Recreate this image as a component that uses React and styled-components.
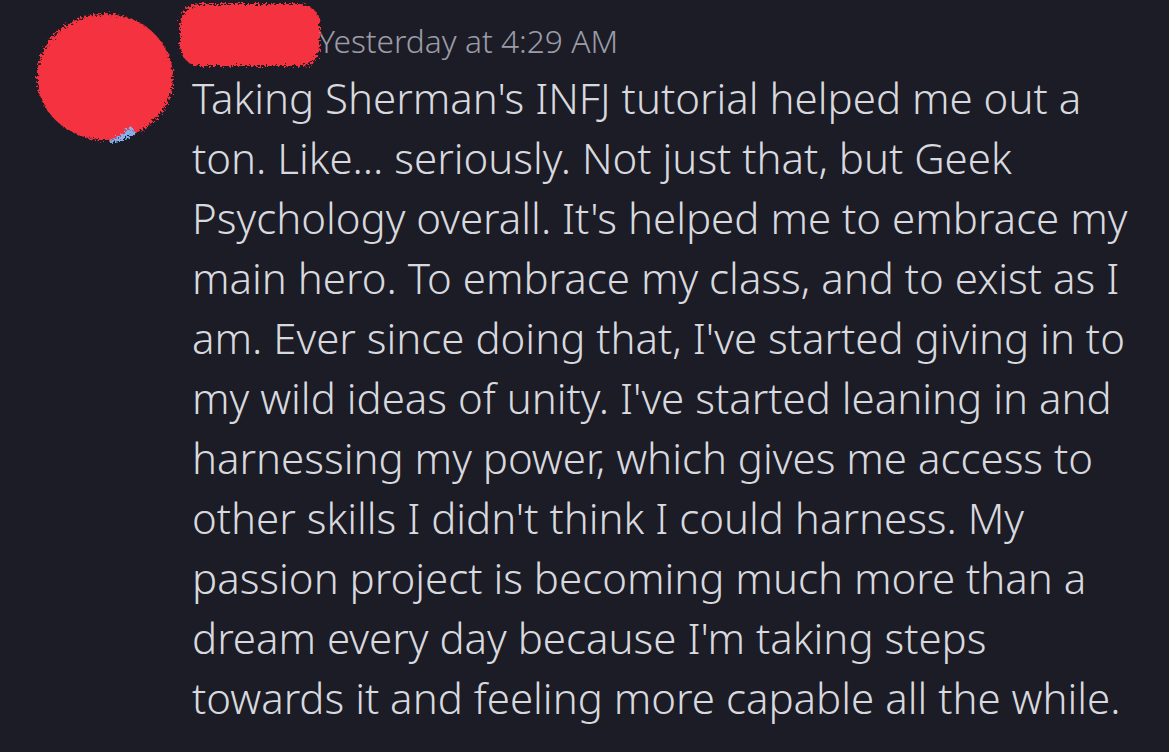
import React from 'react';
import styled, { createGlobalStyle } from 'styled-components';

const GlobalStyle = createGlobalStyle`
  html, body {
    margin: 0;
    padding: 0;
    background-color: #1c1c26;
  }
  body {
    font-family: "Noto Sans", "Open Sans", sans-serif;
  }
`;

const Page = styled.div`
  display: flex;
  width: 1169px;
  height: 752px;
  overflow: hidden;
  background-color: #1c1c26;
`;

const AvatarCol = styled.div`
  width: 160px;
  flex-shrink: 0;
  padding: 8px 0 0 31px;
`;

const Content = styled.div`
  display: flex;
  flex-direction: column;
  padding-left: 1px;
`;

const Header = styled.div`
  display: flex;
  align-items: flex-end;
  height: 68px;
  margin-left: -16px;
`;

const Timestamp = styled.span`
  font-size: 31.7px;
  font-weight: 300;
  color: #9c9ca8;
  line-height: 1;
  margin: 0 0 11px -6px;
  position: relative;
  z-index: 0;
`;

const NameMark = styled.svg`
  display: block;
  position: relative;
  z-index: 1;
`;

const Message = styled.div`
  font-size: 42px;
  font-weight: 300;
  line-height: 60px;
  color: #d8d9de;
  white-space: nowrap;
`;

const Line = styled.div``;

const lines = [
  "Taking Sherman's INFJ tutorial helped me out a",
  "ton. Like... seriously. Not just that, but Geek",
  "Psychology overall. It's helped me to embrace my",
  "main hero. To embrace my class, and to exist as I",
  "am. Ever since doing that, I've started giving in to",
  "my wild ideas of unity. I've started leaning in and",
  "harnessing my power, which gives me access to",
  "other skills I didn't think I could harness. My",
  "passion project is becoming much more than a",
  "dream every day because I'm taking steps",
  "towards it and feeling more capable all the while.",
];

const Avatar = () => (
  <svg width="148" height="140" viewBox="0 0 148 140">
    <defs>
      <filter id="rough" x="-10%" y="-10%" width="120%" height="120%">
        <feTurbulence type="fractalNoise" baseFrequency="0.45" numOctaves="3" seed="3" />
        <feDisplacementMap in="SourceGraphic" scale="9" />
      </filter>
    </defs>
    <g filter="url(#rough)">
      <ellipse cx="74" cy="69" rx="68" ry="63" fill="#f5323f" />
      <path d="M78 132 Q92 128 100 118 L104 124 Q94 134 78 134 Z" fill="#7fb2ee" />
    </g>
  </svg>
);

const Redaction = () => (
  <NameMark width="148" height="70" viewBox="0 0 148 70">
    <defs>
      <filter id="rough2" x="-10%" y="-10%" width="120%" height="120%">
        <feTurbulence type="fractalNoise" baseFrequency="0.45" numOctaves="3" seed="7" />
        <feDisplacementMap in="SourceGraphic" scale="9" />
      </filter>
    </defs>
    <rect x="4" y="6" width="140" height="62" rx="20" fill="#f5323f" filter="url(#rough2)" />
  </NameMark>
);

const App = () => (
  <>
    <GlobalStyle />
    <Page>
      <AvatarCol>
        <Avatar />
      </AvatarCol>
      <Content>
        <Header>
          <Redaction />
          <Timestamp>Yesterday at 4:29 AM</Timestamp>
        </Header>
        <Message>
          {lines.map((l, i) => (
            <Line key={i}>{l}</Line>
          ))}
        </Message>
      </Content>
    </Page>
  </>
);

export default App;
